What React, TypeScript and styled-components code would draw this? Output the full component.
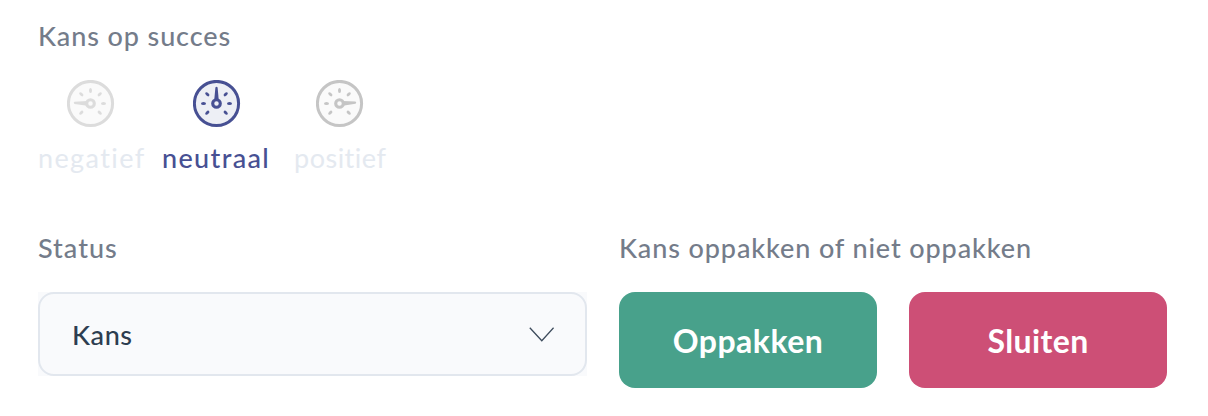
import React from "react";
import styled, { createGlobalStyle } from "styled-components";

const GlobalStyle = createGlobalStyle`
  *, *::before, *::after { box-sizing: border-box; }
  body { margin: 0; background: #fff; font-family: Lato, "Liberation Sans", sans-serif; }
`;

const Panel = styled.main`
  width: 1208px;
  height: 416px;
  padding: 20px 41px 28px 38px;
  overflow: hidden;
`;

const Label = styled.div<{ $tracking: number }>`
  height: 32px;
  line-height: 32px;
  font-size: 27px;
  font-weight: 500;
  letter-spacing: ${(p) => p.$tracking}px;
  color: #747c8a;
  white-space: nowrap;
`;

const Options = styled.div`
  display: flex;
  margin-top: 28px;
`;

const Option = styled.div<{ $width: number; $gap: number; $shift: number }>`
  width: ${(p) => p.$width}px;
  margin-right: ${(p) => p.$gap}px;
  display: flex;
  flex-direction: column;
  align-items: center;

  svg {
    display: block;
    margin-left: ${(p) => p.$shift}px;
  }
`;

const OptionName = styled.span<{ $active?: boolean; $tracking: number }>`
  align-self: flex-start;
  margin-top: 14px;
  height: 32px;
  line-height: 32px;
  font-size: 27px;
  font-weight: ${(p) => (p.$active ? 500 : 400)};
  letter-spacing: ${(p) => p.$tracking}px;
  color: ${(p) => (p.$active ? "#475093" : "#e4e9f0")};
  white-space: nowrap;
`;

const Columns = styled.div`
  display: grid;
  grid-template-columns: 549px 548px;
  column-gap: 32px;
  margin-top: 58px;
`;

const SelectWrap = styled.div`
  margin-top: 28px;
  background: #f9fafc;
`;

const Select = styled.div`
  display: flex;
  align-items: center;
  justify-content: space-between;
  height: 84px;
  padding: 1px 31px 0 32px;
  border: 2px solid #e2e7ee;
  border-radius: 16px;
  font-size: 27px;
  font-weight: 500;
  letter-spacing: 0.6px;
  color: #2d3d50;
`;

const Buttons = styled.div`
  display: grid;
  grid-template-columns: 1fr 1fr;
  gap: 32px;
  margin-top: 28px;
`;

const Button = styled.button<{ $color: string; $tracking: number }>`
  height: 96px;
  padding: 1px 0 0;
  border: 0;
  border-radius: 16px;
  background: ${(p) => p.$color};
  color: #fff;
  font-family: inherit;
  font-size: 32px;
  font-weight: 700;
  letter-spacing: ${(p) => p.$tracking}px;
`;

type GaugeProps = { needle: number; ticks: number[]; color: string; fill: string };

const Gauge = ({ needle, ticks, color, fill }: GaugeProps) => (
  <svg width="48" height="48" viewBox="-23.5 -23.5 48 48" fill="none">
    <circle r="22.1" fill={fill} stroke={color} strokeWidth="3" />
    {ticks.map((angle) => (
      <ellipse key={angle} cx="0" cy="-13" rx="1.5" ry="2.5" fill={color} transform={`rotate(${angle})`} />
    ))}
    <path d="M-2.3 -3L-1.1 -16Q0 -17.6 1.1 -16L2.3 -3Z" fill={color} transform={`rotate(${needle})`} />
    <circle r="3.8" fill={fill} stroke={color} strokeWidth="3.1" />
  </svg>
);

const diagonals = [-135, -45, 45, 135];

export default function App() {
  return (
    <>
      <GlobalStyle />
      <Panel>
        <Label $tracking={0.88}>Kans op succes</Label>
        <Options>
          <Option $width={107} $gap={17} $shift={-1}>
            <Gauge needle={-88} ticks={[...diagonals, 0, 90]} color="#dcdcdc" fill="#fafafa" />
            <OptionName $tracking={1.4}>negatief</OptionName>
          </Option>
          <Option $width={108} $gap={24} $shift={2}>
            <Gauge needle={0} ticks={[...diagonals, -90, 90]} color="#475093" fill="#edeff5" />
            <OptionName $active $tracking={1.35}>neutraal</OptionName>
          </Option>
          <Option $width={92} $gap={0} $shift={-1}>
            <Gauge needle={87} ticks={[...diagonals, 0, -90]} color="#c5c5c5" fill="#fafafa" />
            <OptionName $tracking={0.5}>positief</OptionName>
          </Option>
        </Options>
        <Columns>
          <div>
            <Label $tracking={1}>Status</Label>
            <SelectWrap>
              <Select>
                Kans
                <svg width="25" height="16" viewBox="0 0 25 16" fill="none">
                  <path d="M0.8 0.8L12.8 13.8L24.6 0.8" stroke="#3d4b5c" strokeWidth="1.3" />
                </svg>
              </Select>
            </SelectWrap>
          </div>
          <div>
            <Label $tracking={0.88}>Kans oppakken of niet oppakken</Label>
            <Buttons>
              <Button $color="#48a18b" $tracking={0.5}>Oppakken</Button>
              <Button $color="#cd4f76" $tracking={0.4}>Sluiten</Button>
            </Buttons>
          </div>
        </Columns>
      </Panel>
    </>
  );
}
